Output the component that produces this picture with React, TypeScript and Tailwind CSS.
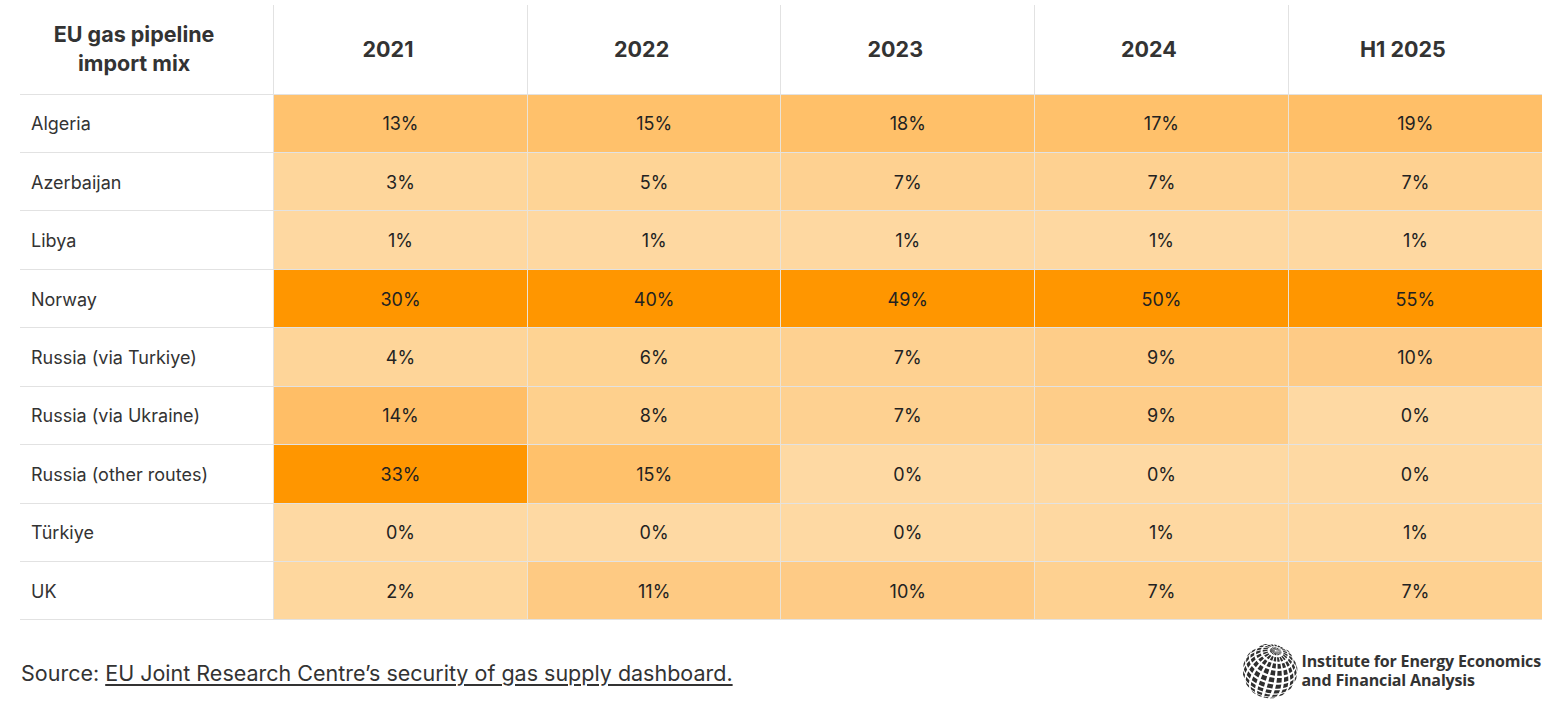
import React from "react";

type Row = { name: string; values: number[] };

const years = ["2021", "2022", "2023", "2024", "H1 2025"];

const rows: Row[] = [
  { name: "Algeria", values: [13, 15, 18, 17, 19] },
  { name: "Azerbaijan", values: [3, 5, 7, 7, 7] },
  { name: "Libya", values: [1, 1, 1, 1, 1] },
  { name: "Norway", values: [30, 40, 49, 50, 55] },
  { name: "Russia (via Turkiye)", values: [4, 6, 7, 9, 10] },
  { name: "Russia (via Ukraine)", values: [14, 8, 7, 9, 0] },
  { name: "Russia (other routes)", values: [33, 15, 0, 0, 0] },
  { name: "Türkiye", values: [0, 0, 0, 1, 1] },
  { name: "UK", values: [2, 11, 10, 7, 7] },
];

// heatmap shades, one per share that appears in the table
const shades: Record<number, string> = {
  0: "bg-[#fed9a3]",
  1: "bg-[#fed8a1]",
  2: "bg-[#fed79e]",
  3: "bg-[#fed69b]",
  4: "bg-[#fed599]",
  5: "bg-[#fed496]",
  6: "bg-[#fed393]",
  7: "bg-[#fed191]",
  8: "bg-[#fed08d]",
  9: "bg-[#fecd89]",
  10: "bg-[#fecb86]",
  11: "bg-[#feca83]",
  13: "bg-[#ffc26e]",
  14: "bg-[#ffbe66]",
  15: "bg-[#ffc16b]",
  17: "bg-[#ffc16b]",
  18: "bg-[#ffc069]",
  19: "bg-[#ffbf68]",
};

function shade(v: number) {
  if (v >= 30) return "bg-[#ff9600]";
  return shades[v] ?? "bg-[#ffc16b]";
}

function Globe() {
  const tilt = (40 * Math.PI) / 180;
  const spin = (-16 * Math.PI) / 180;
  const R = 49;
  const project = (latDeg: number, lonDeg: number) => {
    const la = (latDeg * Math.PI) / 180;
    const lo = (lonDeg * Math.PI) / 180;
    const x = Math.cos(la) * Math.sin(lo);
    const y = Math.sin(la);
    const z = Math.cos(la) * Math.cos(lo);
    const y2 = y * Math.cos(tilt) - z * Math.sin(tilt);
    const z2 = y * Math.sin(tilt) + z * Math.cos(tilt);
    const xr = x * Math.cos(spin) - y2 * Math.sin(spin);
    const yr = x * Math.sin(spin) + y2 * Math.cos(spin);
    return { sx: 50 + R * xr, sy: 50 - R * yr, z: z2 };
  };
  const tiles: string[] = [];
  const gapLat = 2.4;
  const gapLon = 3;
  for (let lat = -90; lat < 90; lat += 15) {
    for (let lon = -180; lon < 180; lon += 18) {
      const a = lat + gapLat;
      const b = lat + 15 - gapLat;
      const c = lon + gapLon;
      const d = lon + 18 - gapLon;
      const pts = [
        project(a, c),
        project(a, (c + d) / 2),
        project(a, d),
        project(b, d),
        project(b, (c + d) / 2),
        project(b, c),
      ];
      if (pts.some((p) => p.z < 0)) continue;
      tiles.push(pts.map((p) => `${p.sx.toFixed(2)},${p.sy.toFixed(2)}`).join(" "));
    }
  }
  return (
    <svg viewBox="0 0 100 100" className="h-[56px] w-[56px] shrink-0">
      {tiles.map((t, i) => (
        <polygon key={i} points={t} fill="#2f2f2f" />
      ))}
    </svg>
  );
}

export default function App() {
  return (
    <div
      className="min-h-screen bg-white px-[20px] pt-[5px] text-[#333]"
      style={{ fontFamily: "Inter, 'Noto Sans', sans-serif" }}
    >
      <table className="w-[1522px] table-fixed border-collapse">
        <thead>
          <tr className="h-[89px] border-b border-[#e2e2e2]">
            <th className="border-r border-[#e2e2e2] pl-2 pr-[33px] text-center text-[21.5px] font-bold leading-[29px] text-[#333]">
              EU gas pipeline
              <br />
              import mix
            </th>
            {years.map((y, i) => (
              <th
                key={y}
                className={`pr-[25px] text-center text-[21.5px] font-bold text-[#333] ${
                  i < years.length - 1 ? "border-r border-[#e2e2e2]" : ""
                }`}
              >
                {y}
              </th>
            ))}
          </tr>
        </thead>
        <tbody>
          {rows.map((r) => (
            <tr key={r.name} className="h-[58.45px] border-b border-[#e2e2e2]">
              <td className="border-r border-[#e2e2e2] pl-[11px] pt-px text-[18px] text-[#333]">
                {r.name}
              </td>
              {r.values.map((v, i) => (
                <td
                  key={i}
                  className={`${shade(v)} pt-px text-center text-[18px] text-[#222] ${
                    i < r.values.length - 1 ? "border-r border-[#ebe3d6]" : ""
                  }`}
                >
                  {v}%
                </td>
              ))}
            </tr>
          ))}
        </tbody>
      </table>

      <div className="mt-[23px] flex w-[1522px] items-center justify-between">
        <p className="pl-px pt-[3px] text-[21.5px] text-[#333]">
          Source:{" "}
          <a href="#" className="underline underline-offset-[3px]">
            EU Joint Research Centre’s security of gas supply dashboard.
          </a>
        </p>
        <div className="flex items-center gap-[4px] pr-px">
          <Globe />
          <div
            className="text-[16px] font-bold leading-[19px] tracking-[-0.15px] text-[#333]"
            style={{ fontFamily: "'Open Sans', sans-serif" }}
          >
            <div>Institute for Energy Economics</div>
            <div>and Financial Analysis</div>
          </div>
        </div>
      </div>
    </div>
  );
}
